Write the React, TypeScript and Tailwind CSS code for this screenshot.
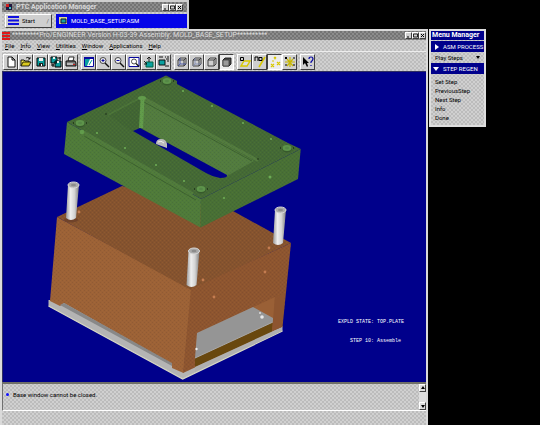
import type { ReactNode } from 'react'

const font = 'font-[Roboto,"Liberation_Sans",sans-serif] text-[6px] leading-[9px]'
const grey = 'bg-[repeating-conic-gradient(#bcbcbc_0_25%,#d0d0d0_0_50%)] bg-size-[4px_4px]'
const darkGrey = 'bg-[repeating-conic-gradient(#747474_0_25%,#8c8c8c_0_50%)] bg-size-[4px_4px]'
const raised = 'border border-t-white border-l-white border-r-[#404040] border-b-[#404040]'
const sunken = 'border border-t-[#404040] border-l-[#404040] border-r-white border-b-white bg-[#ececec]'

function WindowButtons() {
  return (
    <div className="flex shrink-0">
      {['min', 'max', 'close'].map((kind) => (
        <button key={kind} aria-label={kind} className={`h-[7px] w-[7px] bg-[#d0d0d0] ${raised}`}>
          <svg viewBox="0 0 5 5" className="block h-[5px] w-[5px]" fill="none" stroke="#000">
            {kind === 'min' && <path d="M1 4h2" />}
            {kind === 'max' && <path d="M.5 1h4v3h-4z" strokeWidth=".8" />}
            {kind === 'close' && <path d="M1 1l3 3M4 1l-3 3" />}
          </svg>
        </button>
      ))}
    </div>
  )
}

const cube = 'M2 4h6v6H2zM2 4l2-2h6v6l-2 2M8 4l2-2'

type Tool = { name: string; art: ReactNode; on?: boolean }

const tools: Tool[][] = [
  [
    { name: 'New', art: <path d="M3 1h4l3 3v7H3zM7 1v3h3" fill="#fff" stroke="#000" strokeWidth=".9" /> },
    {
      name: 'Open',
      art: (
        <>
          <path d="M1 10V4h3l1 1h4v2" fill="#f4ea50" stroke="#000" strokeWidth=".9" />
          <path d="M1 10l2-4h8l-2 4z" fill="#d8c820" stroke="#000" strokeWidth=".8" />
          <path d="M6 2q2-2 4 1M10 1v2H8" fill="none" stroke="#000" strokeWidth=".8" />
        </>
      ),
    },
    {
      name: 'Save',
      art: (
        <>
          <path d="M2 2h8v8H2z" fill="#0a9c9c" stroke="#000" />
          <path d="M4 2h4v3H4z" fill="#eee" />
          <path d="M4 7h4v3H4z" fill="#222" />
          <path d="M6 8h1v2H6z" fill="#fff" />
        </>
      ),
    },
    {
      name: 'Save a copy',
      art: (
        <>
          <path d="M1 1h6v6H1zM5 5h6v6H5z" fill="#0a9c9c" stroke="#000" />
          <path d="M3 1h2v2H3zM7 5h2v2H7z" fill="#eee" />
          <path d="M8 2h3M10 1v3M1 9h3M3 8v3" stroke="#000" />
        </>
      ),
    },
    {
      name: 'Print',
      art: (
        <>
          <path d="M3 5l1-4h5L8 5z" fill="#fff" stroke="#000" strokeWidth=".8" />
          <path d="M1 5h9l1 2v3H1z" fill="#777" stroke="#000" strokeWidth=".9" />
          <path d="M2 8h6" stroke="#fff" />
          <path d="M8 8h2v1H8z" fill="#d02020" />
        </>
      ),
    },
  ],
  [
    {
      name: 'Repaint',
      art: (
        <>
          <path d="M1.500 1.500h9v9h-9z" fill="#fff" stroke="#0808a0" />
          <path d="M1 1h10v2H1z" fill="#0808a0" />
          <path d="M2 3h5L4 10H2z" fill="#0aa0a0" />
          <path d="M9 4L6 9" stroke="#0aa0a0" />
        </>
      ),
    },
    {
      name: 'Zoom in',
      art: (
        <>
          <circle cx="5" cy="4.500" r="3" fill="#eee" stroke="#222" strokeWidth=".8" />
          <path d="M5 3v3M3.500 4.500h3" stroke="#0808a0" />
          <path d="M7 7l4 4" stroke="#111" strokeWidth="1.500" />
        </>
      ),
    },
    {
      name: 'Zoom out',
      art: (
        <>
          <circle cx="5" cy="4.500" r="3" fill="#eee" stroke="#222" strokeWidth=".8" />
          <path d="M3.500 4.500h3" stroke="#0808a0" />
          <path d="M7 7l4 4" stroke="#111" strokeWidth="1.500" />
        </>
      ),
    },
    {
      name: 'Refit',
      art: (
        <>
          <path d="M1 1.500h10v9H1z" fill="#fff" stroke="#0808a0" />
          <circle cx="6" cy="5.500" r="2.500" fill="none" stroke="#222" strokeWidth=".8" />
          <path d="M8 7.500l3 3" stroke="#111" strokeWidth="1.300" />
        </>
      ),
    },
    {
      name: 'Orient',
      art: (
        <>
          <path d="M3 6h7v5H3z" fill="#0aa0a0" stroke="#064" />
          <path d="M6 6V1M4 3l2-2 2 2M1 5l3 3M1 8h3" fill="none" stroke="#111" strokeWidth=".9" />
        </>
      ),
    },
    {
      name: 'Saved views',
      art: (
        <>
          <path d="M1 4h6v5H1z" fill="#0aa0a0" stroke="#111" />
          <path d="M1 1h4M7 1h1M9 1h2M8 3h3M9 5h2M7 10h4" fill="none" stroke="#111" />
        </>
      ),
    },
  ],
  [
    {
      name: 'Wireframe',
      art: (
        <>
          <path d={cube} fill="none" stroke="#333" strokeWidth=".9" />
          <path d="M4 2v6h6M4 8l-2 2" fill="none" stroke="#3344a0" strokeWidth=".8" />
        </>
      ),
    },
    {
      name: 'Hidden line',
      art: (
        <>
          <path d={cube} fill="none" stroke="#333" strokeWidth=".9" />
          <path d="M4 2v6h6M4 8l-2 2" fill="none" stroke="#7784b0" strokeWidth=".8" />
        </>
      ),
    },
    { name: 'No hidden', art: <path d={cube} fill="none" stroke="#333" strokeWidth=".9" /> },
    {
      name: 'Shaded',
      on: true,
      art: (
        <>
          <path d="M2 4l2-2h6v6l-2 2H2z" fill="#555" stroke="#000" strokeWidth=".8" />
          <path d="M2 4h6v6H2z" fill="#999" stroke="#222" strokeWidth=".6" />
        </>
      ),
    },
  ],
  [
    {
      name: 'Datum planes',
      art: (
        <>
          <path d="M5 5h6l-3 5H2z" fill="#ddd" stroke="#d8c800" strokeWidth="1.400" />
          <path d="M1.500 1.500h3v3h-3z" fill="none" stroke="#000" />
        </>
      ),
    },
    {
      name: 'Datum axes',
      art: (
        <>
          <path d="M11 1L5 11" stroke="#d8c800" strokeWidth="1.600" />
          <path d="M1 5V1h3v4M5 1.500h3v3H5z" fill="none" stroke="#000" />
        </>
      ),
    },
    {
      name: 'Datum points',
      on: true,
      art: <path d="M5 1l2 2M7 1L5 3M8 6l3 3M11 6L8 9M2 8l3 3M5 8l-3 3M3 5h2" stroke="#d8c800" strokeWidth="1.200" />,
    },
    {
      name: 'Coordinate systems',
      art: (
        <>
          <path d="M6 1v10M1 6h10M3 3l6 7M9 3l-6 7" stroke="#c8b800" strokeWidth="1.200" />
          <path d="M1 1l2 2M3 1L1 3M10 1v2M10 8v2M1 9h2" stroke="#000" />
        </>
      ),
    },
  ],
  [
    {
      name: "What's this",
      art: (
        <>
          <path d="M1 1v8l2-2 2 4 1-1-1-3h2z" fill="#000" />
          <path d="M7 3q0-2 2-2t2 2q0 1-2 3v1M9 9v1" fill="none" stroke="#0808a0" strokeWidth="1.200" />
        </>
      ),
    },
  ],
]

function ToolButton({ name, art, on }: Tool) {
  return (
    <button aria-label={name} aria-pressed={!!on} className={`flex h-4 w-[15px] items-center justify-center ${on ? sunken : `bg-[#cfcfcf] ${raised}`}`}>
      <svg viewBox="0 0 12 12" className="h-3 w-3">{art}</svg>
    </button>
  )
}

function Pin({ x, y, h }: { x: number; y: number; h: number }) {
  return (
    <g transform={`translate(${x} ${y})`}>
      <path d={`M-5.500 0L-7.500 ${h}q5 4 10 0L5.500 0z`} fill="url(#pin)" />
      <ellipse rx="5.500" ry="3" fill="#aaa" stroke="#d8d8d8" />
      <ellipse rx="2.500" ry="1.200" fill="#8c8c8c" />
    </g>
  )
}

const screws = [[97, 133], [125, 148], [156, 165], [183, 91], [212, 106], [243, 123], [271, 139], [184, 181], [224, 198]]
const bushings = [[167, 81], [80, 123], [287, 148], [201, 189]]
const pinholes = [[79, 212], [269, 248], [265, 272], [203, 280], [214, 297]]

function MoldBase() {
  return (
    <svg viewBox="3 72 300 310" className="block h-[310px] w-[300px]" role="img" aria-label="Exploded mold base">
      <defs>
        <linearGradient id="pin">
          <stop offset="0" stopColor="#999" />
          <stop offset=".35" stopColor="#eee" />
          <stop offset=".65" stopColor="#d4d4d4" />
          <stop offset="1" stopColor="#808080" />
        </linearGradient>
        <pattern id="grain" width="4" height="4" patternUnits="userSpaceOnUse">
          <path d="M0 0h1v1H0zM2 2h1v1H2z" fill="#c08030" opacity=".16" />
          <path d="M2 0h1v1H2zM0 2h1v1H0z" fill="#302010" opacity=".1" />
        </pattern>
        <pattern id="leaf" width="4" height="4" patternUnits="userSpaceOnUse">
          <path d="M0 0h1v1H0zM2 2h1v1H2z" fill="#70a020" opacity=".15" />
          <path d="M2 0h1v1H2zM0 2h1v1H0z" fill="#203818" opacity=".12" />
        </pattern>
      </defs>

      <path d="M48.500 300L62 300 172 358 183 371l99.500-45v5L182.700 379 48.500 306z" fill="#b4b4b4" />
      <path d="M48.500 306L182.700 379l99.800-48" fill="none" stroke="#d8d8c4" strokeWidth="1.200" />
      <path d="M57 217l135 72-8.500 84-11.500-5v-4L64 303l-4 3-10-5z" fill="#9c6237" />
      <path d="M64 303l108 60v3L60 305z" fill="#888" />
      <path d="M57 217l65-31 111 25 58 32-100 47z" fill="#85532f" />
      <path d="M191 289l100-46-8.500 84-99.500 46z" fill="#8d5530" />
      <path d="M57 217l65-31 111 25 58 32-8.500 84-99.500 46-11-9L64 303l-14-3z" fill="url(#grain)" />
      <path d="M197 333l78-36-2 36-78 34z" fill="#9a6036" />
      <path d="M195 358l78-36-1 10-77 35z" fill="#69480f" />
      <path d="M195 367l87-40v4l-87 41z" fill="#b0b0b0" />
      <path d="M197 333l56-26 20 11v4l-78 36z" fill="#959595" />
      <path d="M195 358l78-36" stroke="#a8a8a8" />
      <path d="M275 297l10-4-3 34-10 4z" fill="#8d5530" />
      <circle cx="262" cy="317" r="1.800" fill="#e8e8e8" />
      <circle cx="260" cy="313" r="1" fill="#ddd" />
      <circle cx="196.500" cy="349" r="1.200" fill="#eee" />
      {pinholes.map(([x, y]) => <circle key={x} cx={x} cy={y} r="1.400" fill="#c47c50" />)}
      <ellipse cx="71" cy="220" rx="7" ry="2.500" fill="#70432a" />
      <Pin x={73.5} y={185} h={33} />
      <Pin x={280.5} y={210} h={33} />
      <Pin x={194} y={251} h={34} />

      <path d="M67 122l134 77-.5 28.500L64 154z" fill="#4f7a3b" />
      <path d="M201 199l99.700-50-2.700 30-97.500 48.500z" fill="#486f36" />
      <path d="M67 122l99-46.500 11 5.500v3l111 59 12.700 6-99.700 50z" fill="#446936" />
      <path d="M109 115l33-17-2 30-7 4z" fill="#416534" />
      <path d="M142 98l112 63-27 15-86-48z" fill="#527b40" />
      <path d="M142 97l115 63" stroke="#527a3f" strokeWidth="3" strokeLinecap="round" />
      <path d="M144 102l108 59" stroke="#3d6230" />
      <path d="M108 115l34-18" stroke="#4c743a" strokeWidth="1.500" />
      <path d="M82 131l111 63" stroke="#507a3d" strokeWidth="3" />
      <path d="M84 136l112 64" stroke="#3d6230" />
      <path d="M142.500 99L141 128" stroke="#619b4b" strokeWidth="4" />
      <path d="M67 122l99-46.500 11 5.500v3l111 59 12.700 6-2.700 30-97.500 48.500L64 154z" fill="url(#leaf)" />
      <path d="M133 131l7-3 87 47q1 3-7 3-7-1-14-5z" fill="#00008b" />
      <path d="M156 144q0-5 5-5t6 5v4z" fill="#bbb" />
      <path d="M158 142q3-2 6 1" fill="none" stroke="#eee" />
      {bushings.map(([x, y]) => (
        <g key={x}>
          <ellipse cx={x} cy={y + 1} rx="5" ry="3.500" fill="#375a2c" />
          <ellipse cx={x} cy={y} rx="4.500" ry="3" fill="#5e944b" />
          <ellipse cx={x} cy={y} rx="2" ry="1.200" fill="#548646" />
          <path d={`M${x - 7} ${y}h1M${x + 6} ${y}h1`} stroke="#1c3018" strokeWidth="1.500" />
        </g>
      ))}
      <ellipse cx="142" cy="98" rx="4" ry="2" fill="#619b4b" />
      <circle cx="82" cy="132" r="2.300" fill="#619b4b" />
      <circle cx="270" cy="177" r="1.500" fill="#6cab55" />
      {screws.map(([x, y]) => <circle key={x} cx={x} cy={y} r="1.100" fill="#6cab55" />)}
      <path d="M105 114h2M257 159h2" stroke="#1c3018" />
    </svg>
  )
}

const menus = ['File', 'Info', 'View', 'Utilities', 'Window', 'Applications', 'Help']

export default function App() {
  return (
    <div className={`flex min-h-screen flex-col bg-black text-black ${font}`}>
      <section className={`w-[189px] border-2 border-b-0 border-[#cfcfcf] ${grey}`}>
        <header className={`flex h-[10px] items-center gap-1 px-1 text-[#d8d8d8] ${darkGrey}`}>
          <svg viewBox="0 0 6 6" className="h-1.5 w-1.5">
            <path d="M0 0h6v6H0z" fill="#201840" />
            <path d="M0 0h3v3H0z" fill="#d02020" />
            <path d="M3 3h2v2H3z" fill="#40c0c0" />
          </svg>
          <h1 className="flex-1 text-[7px] font-bold">PTC Application Manager</h1>
          <WindowButtons />
        </header>
        <div className="flex h-[17px] items-center gap-1 pl-[3px]">
          <button className={`flex h-[14px] w-[47px] items-center gap-[3px] bg-[#cfcfcf] px-0.5 ${raised}`}>
            <svg viewBox="0 0 11 9" className="h-[9px] w-[11px]">
              <path d="M0 1h11M0 4.500h11M0 8h11" stroke="#1010e0" strokeWidth="2" />
            </svg>
            <span className="flex-1 text-left">Start</span>
            <span className="text-[#606060]">/</span>
          </button>
          <button className="flex h-[14px] flex-1 items-center gap-1 bg-[#0404e8] px-[3px] text-white">
            <svg viewBox="0 0 8 8" className="h-2 w-2">
              <path d="M0 0h8v7H0z" fill="#d8d890" />
              <path d="M2 2h5v4H2z" fill="#18a0a0" stroke="#113" />
            </svg>
            MOLD_BASE_SETUP.ASM
          </button>
        </div>
      </section>

      <div className="flex flex-1 items-start pr-[54px]">
        <main className={`flex min-w-0 flex-1 flex-col self-stretch border-2 border-b-0 border-[#dadada] ${grey}`}>
          <header className={`flex h-[9px] items-center gap-[2px] text-[#dcdcdc] ${darkGrey}`}>
            <svg viewBox="0 0 8 8" className="h-2 w-2 shrink-0">
              <path d="M0 1h8M0 4h8M0 7h8" stroke="#e01818" strokeWidth="2" />
            </svg>
            <h2 className="min-w-0 flex-1 truncate text-[7px]">*********Pro/ENGINEER Version H-03-39 Assembly: MOLD_BASE_SETUP**********</h2>
            <WindowButtons />
          </header>
          <nav className="flex h-[11px] items-center gap-[6px] pl-[3px]">
            {menus.map((m) => (
              <button key={m} className="first-letter:underline">{m}</button>
            ))}
          </nav>
          <div className="flex h-5 items-center gap-[3px] border-t border-[#ededed] pl-px">
            {tools.map((group, i) => (
              <div key={i} className="flex">
                {group.map((t) => <ToolButton key={t.name} {...t} />)}
              </div>
            ))}
          </div>
          <div className="relative border-t border-l border-[#303060] bg-[#00008b]">
            <MoldBase />
            <div className="absolute top-[246px] right-[22px] flex flex-col gap-[10px] font-['Liberation_Mono',monospace] text-[5px] leading-[9px] text-white">
              <p>EXPLD STATE: TOP.PLATE</p>
              <p className="pl-3">STEP 10: Assemble</p>
            </div>
          </div>
          <div className="flex h-[29px] justify-between border-t-2 border-b border-l border-t-[#707068] border-b-white border-l-[#707070]">
            <p className="flex h-[20px] items-center gap-1 pl-[3px]">
              <span className="h-[3px] w-[3px] rounded-full bg-[#1010ff]" />
              Base window cannot be closed.
            </p>
            <div className="flex w-[7px] flex-col justify-between bg-[#dedede]">
              <button aria-label="Scroll up" className={`flex h-2 items-center justify-center ${raised}`}>
                <svg viewBox="0 0 4 4" className="h-1 w-1"><path d="M0 3l2-3 2 3z" /></svg>
              </button>
              <button aria-label="Scroll down" className={`flex h-2 items-center justify-center ${raised}`}>
                <svg viewBox="0 0 4 4" className="h-1 w-1"><path d="M0 1l2 3 2-3z" /></svg>
              </button>
            </div>
          </div>
        </main>

        <aside className={`ml-px flex w-[57px] flex-col border-2 border-[#dedede] ${grey}`}>
          <h2 className="h-[9px] bg-[#00008b] pl-px text-[7px] font-bold whitespace-nowrap text-white">Menu Manager</h2>
          <button className="mt-px flex h-[11px] items-center gap-1 bg-[#00008b] pl-1 whitespace-nowrap text-white">
            <svg viewBox="0 0 4 6" className="h-1.5 w-1 shrink-0"><path d="M0 0l4 3-4 3z" fill="#fff" /></svg>
            ASM PROCESS
          </button>
          <label className="relative flex h-[11px] items-center">
            <select aria-label="Play Steps" className="h-[9px] w-full appearance-none bg-transparent pl-1">
              <option>Play Steps</option>
            </select>
            <svg viewBox="0 0 4 3" className="pointer-events-none absolute right-1 h-[3px] w-1"><path d="M0 0h4L2 3z" /></svg>
          </label>
          <button className="flex h-[11px] items-center gap-1 bg-[#00008b] pl-0.5 whitespace-nowrap text-white">
            <svg viewBox="0 0 6 4" className="h-1 w-1.5 shrink-0"><path d="M0 0h6L3 4z" fill="#fff" /></svg>
            STEP REGEN
          </button>
          <ul className="py-[3px] pl-1">
            {['Set Step', 'PreviousStep', 'Next Step', 'Info', 'Done'].map((s) => (
              <li key={s} className="flex h-[9px]"><button>{s}</button></li>
            ))}
          </ul>
        </aside>
      </div>
    </div>
  )
}
